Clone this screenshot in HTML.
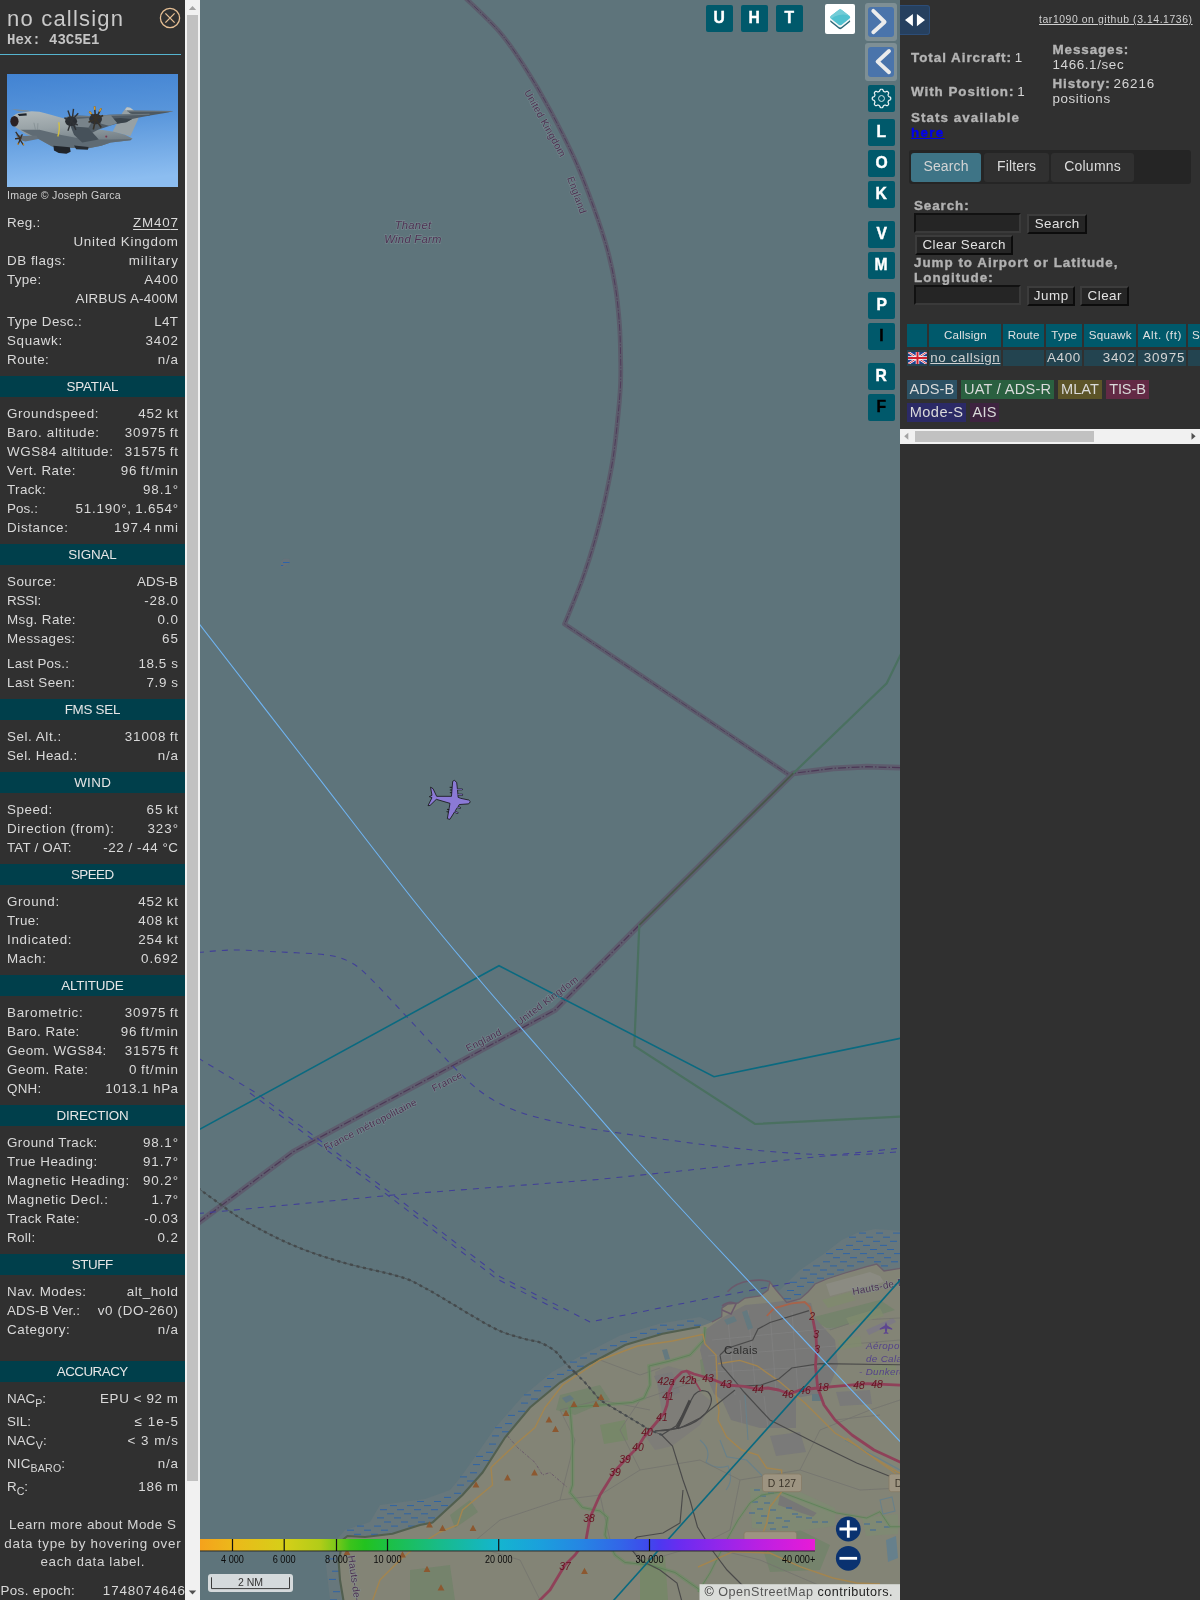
<!DOCTYPE html>
<html><head><meta charset="utf-8"><title>tar1090</title><style>
*{box-sizing:border-box}
html,body{margin:0;padding:0;font-family:"Liberation Sans",sans-serif}
body{width:1200px;height:1600px;position:relative;overflow:hidden;will-change:transform;background:#5e747b;font-family:"Liberation Sans",sans-serif;font-size:13.4px;color:#d8d8d8}
#L{position:absolute;left:0;top:0;width:185px;height:1600px;background:#303030;overflow:hidden;letter-spacing:.42px}
#L .cs{position:absolute;left:7px;top:4.6px;font-size:22px;line-height:28px;color:#c9c9c9;letter-spacing:1.25px;white-space:nowrap}
#L .hex{position:absolute;left:7px;top:30.5px;font-family:"Liberation Mono",monospace;font-weight:bold;font-size:14px;line-height:18px;color:#c4c4c4;letter-spacing:0;white-space:nowrap}
#L .close{position:absolute;left:158px;top:6px}
#L .tl{position:absolute;left:0;top:53.6px;width:181px;height:1.3px;background:#55b4cf}
#L .ph{position:absolute;left:7px;top:74px}
#L .cap{position:absolute;left:7px;top:188px;font-size:10.6px;line-height:14px;color:#d0d0d0;letter-spacing:.25px;white-space:nowrap}
#L .r{position:absolute;left:7px;width:171px;height:19px;line-height:19px;display:flex;justify-content:space-between;white-space:nowrap;color:#d9d9d9}
#L .r u{text-decoration:underline;text-underline-offset:1.5px}
#L .r sub{font-size:10.6px;line-height:0;vertical-align:-3.5px}
#L .ep{left:0;width:185px}
#L .h{position:absolute;left:0;width:185px;height:21px;line-height:21px;background:#003f4b;color:#e6e6e6;text-align:center;letter-spacing:.5px}
#L .learn{position:absolute;left:0;width:185px;top:1516.1px;line-height:18.6px;text-align:center;color:#d4d4d4}
#LS{position:absolute;left:185px;top:0;width:15px;height:1600px;background:#f1f1f1}
#LS .th{position:absolute;left:2px;top:15px;width:11px;height:1466px;background:#c1c1c1}
#LS .au{position:absolute;left:0;top:0}
#LS .ad{position:absolute;left:0;top:1584.6px}
#M{position:absolute;left:200px;top:0}
#M .b1{stroke:#5c5c6c;stroke-width:4.7;fill:none;stroke-linejoin:round}
#M .b1c{stroke:#4f3c5a;stroke-width:1;fill:none;stroke-dasharray:7 1.5 1.5 1.5}
#M .b2{stroke:#5e5d6e;stroke-width:5.8;fill:none;stroke-linejoin:round}
#M .b2c{stroke:#4c3856;stroke-width:1.2;fill:none;stroke-dasharray:8 2 1.5 2}
#M .gr{stroke:#4a7060;stroke-width:2.2;fill:none}
#M .db{stroke:#413f98;stroke-width:1.05;fill:none;stroke-dasharray:6 6}
#M .tun0{stroke:#4a5052;stroke-width:.9;fill:none;opacity:.85}
#M .tun{stroke:#454a4c;stroke-width:2.3;fill:none;stroke-dasharray:3 3.6}
#M .ro{stroke:#0a6a80;stroke-width:1.6;fill:none}
#M .tr{stroke:#6fb4f2;stroke-width:1.1;fill:none}
#M .ml{font-size:10.1px;fill:#4d3352;letter-spacing:.25px;stroke:rgba(135,152,158,.5);stroke-width:1.3px;paint-order:stroke}
#M .it{font-style:italic;font-size:11.3px;fill:#4f3354}
#M .abt{font-size:10.6px;fill:#0c0c0c}
#M .sc{font-size:10.5px;fill:#333}
#M .at{font-size:12.6px;letter-spacing:.48px}
#M .pr{stroke:#a3854f;stroke-width:1.4;fill:none}
#M .mw{stroke:#8f4159;stroke-width:2.8;fill:none;stroke-linejoin:round}
#M .shd{font-size:10.3px;font-style:italic;fill:#65121f}
#M .city{font-size:11.5px;fill:#2d2d2d;letter-spacing:.3px}
#M .ap{font-size:9.8px;font-style:italic;fill:#54438a;letter-spacing:.35px}
#M .rd{font-size:10.4px;fill:#3b352a;letter-spacing:.2px}
.mb{position:absolute;width:27px;height:27px;background:#00596b;border-radius:2px;color:#fff;font-weight:bold;font-size:17px;line-height:26px;text-align:center}
.mb.k{color:#000}
.mb b{display:inline-block;transform:scaleX(.92);-webkit-text-stroke:.45px}
.nv{position:absolute;left:865px;width:32px;height:38px;background:rgba(255,255,255,.2);border-radius:3px}
.nv i{position:absolute;left:3px;top:4px;width:26px;height:30px;background:#4a74ab;border-radius:3px}
.nv svg{position:absolute;left:3px;top:4px}
#ly{position:absolute;left:825px;top:4px;width:30px;height:30px;background:#fff;border-radius:2px}
#R{position:absolute;left:900px;top:0;width:300px;height:1600px;background:#303030;overflow:hidden}
#R .tg{position:absolute;left:0;top:5px;width:30px;height:30px;background:#26405f;border-radius:0 3px 3px 0;border:1px solid #2c4d78;border-left:0}
#R .gh{position:absolute;right:8px;top:13px;font-size:10.4px;line-height:14px;color:#d0d0d0;text-decoration:underline;white-space:nowrap}
#R .st{position:absolute;font-size:13.4px;line-height:15px;white-space:nowrap;color:#d6d6d6}
#R .st b{color:#b4b4b4;-webkit-text-stroke:.35px}
#R .tb{position:absolute;left:9px;top:150px;width:282px;height:34px;background:#252525;border-radius:3px}
#R .tab{position:absolute;top:3px;height:29px;line-height:27px;text-align:center;background:#303030;border-radius:3px;font-size:14px;color:#dcdcdc}
#R .tab.a{background:#3e7486;color:#d4d4d4}
#R .lb{position:absolute;left:14px;font-weight:bold;-webkit-text-stroke:.35px;color:#b2b2b2;line-height:15px;white-space:nowrap}
#R .in{position:absolute;left:14px;width:107px;height:20px;background:#252525;border:2px solid;border-color:#111 #3a3a3a #3a3a3a #111}
#R .bt{position:absolute;height:20px;background:#252525;border:2px solid;border-color:#3c3c3c #0c0c0c #0c0c0c #3c3c3c;color:#e2e2e2;text-align:center;line-height:15px;font-size:13.4px;white-space:nowrap}
#R .th{position:absolute;top:324px;height:23px;background:#00596b;color:#e0e0e0;font-size:11.6px;line-height:21px;text-align:center;white-space:nowrap;overflow:hidden}
#R .td{position:absolute;top:349.5px;height:16.5px;background:#234450;color:#d4d4d4;font-size:13.4px;line-height:16.5px;white-space:nowrap;overflow:hidden}
#R .lg{position:absolute;height:18.6px;line-height:18.6px;font-size:14.6px;color:#dadada;text-align:center;white-space:nowrap}
#R .hs{position:absolute;left:0;top:429.4px;width:300px;height:14.6px;background:#f1f1f1}
#R .hs i{position:absolute;left:15px;top:2px;width:179px;height:10.6px;background:#c1c1c1}
</style></head><body>
<svg id="M" width="700" height="1600" viewBox="200 0 700 1600">
<rect x="200" y="0" width="700" height="1600" fill="#5e747b"/>
<path d="M330.0 1600.0 L326.0 1565.0 L332.0 1545.0 L345.0 1530.0 L370.0 1522.0 L380.0 1505.0 L425.0 1499.0 L450.0 1490.0 L460.0 1478.0 L470.0 1464.0 L495.0 1428.0 L522.0 1397.0 L552.0 1372.0 L585.0 1353.5 L620.0 1335.5 L660.0 1323.5 L700.0 1317.0 L712.0 1322.0 L700.0 1326.7 L700.0 1326.7 L662.5 1333.7 L625.0 1345.0 L590.0 1363.7 L560.0 1382.5 L530.0 1407.5 L505.0 1437.5 L482.5 1472.5 L462.5 1495.0 L432.5 1522.5 L420.0 1525.0 L392.5 1533.7 L365.0 1537.0 L347.5 1536.0 L342.5 1540.0 L338.7 1562.5 L340.0 1580.0 L343.7 1602.0 Z" fill="#67777c"/>
<path d="M778.0 1292.0 L790.0 1280.0 L800.0 1270.0 L825.0 1253.0 L841.7 1240.0 L858.0 1232.5 L875.0 1229.0 L902.0 1231.0 L902.0 1268.0 L902.0 1268.0 L884.0 1271.0 L876.7 1264.0 L866.7 1266.7 L845.0 1273.0 L826.7 1279.0 L815.0 1284.0 L808.0 1292.0 L800.0 1299.0 L786.7 1302.5 L776.0 1290.0 L770.0 1282.0 Z" fill="#67777c"/>
<path d="M343.7 1602.0 L340.0 1580.0 L338.7 1562.5 L342.5 1540.0 L347.5 1536.0 L365.0 1537.0 L392.5 1533.7 L420.0 1525.0 L432.5 1522.5 L462.5 1495.0 L482.5 1472.5 L505.0 1437.5 L530.0 1407.5 L560.0 1382.5 L590.0 1363.7 L625.0 1345.0 L662.5 1333.7 L700.0 1326.7 L712.0 1322.0 L721.7 1316.7 L722.0 1308.0 L728.0 1304.0 L738.0 1303.0 L745.0 1298.0 L760.0 1296.0 L768.0 1290.0 L770.0 1282.0 L776.0 1290.0 L786.7 1302.5 L800.0 1299.0 L808.0 1292.0 L815.0 1284.0 L826.7 1279.0 L845.0 1273.0 L866.7 1266.7 L876.7 1264.0 L884.0 1271.0 L902.0 1268.0 L902.0 1602.0 Z" fill="#838476"/>
<path d="M687.0 1321.1h7 M660.0 1325.2h7 M677.0 1325.2h7 M694.0 1325.2h7 M650.0 1329.3h7 M667.0 1329.3h7 M640.0 1333.4h7 M657.0 1333.4h7 M630.0 1337.5h7 M620.0 1341.6h7 M610.0 1345.7h7 M600.0 1349.8h7 M590.0 1353.9h7 M580.0 1358.0h7 M570.0 1362.1h7 M577.0 1366.2h7 M567.0 1370.3h7 M557.0 1374.4h7 M547.0 1378.5h7 M544.0 1386.7h7 M534.0 1390.8h7 M524.0 1394.9h7 M531.0 1399.0h7 M521.0 1403.1h7 M518.0 1411.3h7 M508.0 1415.4h7 M505.0 1423.6h7 M495.0 1427.7h7 M502.0 1431.8h7 M492.0 1435.9h7 M489.0 1444.1h7 M486.0 1452.3h7 M476.0 1456.4h7 M483.0 1460.5h7 M473.0 1464.6h7 M470.0 1472.8h7 M460.0 1476.9h7 M467.0 1481.0h7 M457.0 1485.1h7 M454.0 1493.3h7 M444.0 1497.4h7 M417.0 1501.5h7 M434.0 1501.5h7 M390.0 1505.6h7 M407.0 1505.6h7 M424.0 1505.6h7 M441.0 1505.6h7 M380.0 1509.7h7 M397.0 1509.7h7 M414.0 1509.7h7 M431.0 1509.7h7 M387.0 1513.8h7 M404.0 1513.8h7 M421.0 1513.8h7 M377.0 1517.9h7 M394.0 1517.9h7 M411.0 1517.9h7 M428.0 1517.9h7 M384.0 1522.0h7 M401.0 1522.0h7 M418.0 1522.0h7 M357.0 1526.1h7 M374.0 1526.1h7 M391.0 1526.1h7 M408.0 1526.1h7 M347.0 1530.2h7 M364.0 1530.2h7 M381.0 1530.2h7 M354.0 1534.3h7 M371.0 1534.3h7 M334.0 1542.5h7 M331.0 1550.7h7 M328.0 1558.9h7 M332.0 1571.2h7 M329.0 1579.4h7 M333.0 1591.7h7 M330.0 1599.9h7 M859.0 1233.1h7 M876.0 1233.1h7 M893.0 1233.1h7 M849.0 1237.2h7 M866.0 1237.2h7 M883.0 1237.2h7 M856.0 1241.3h7 M873.0 1241.3h7 M890.0 1241.3h7 M846.0 1245.4h7 M863.0 1245.4h7 M880.0 1245.4h7 M836.0 1249.5h7 M853.0 1249.5h7 M870.0 1249.5h7 M887.0 1249.5h7 M826.0 1253.6h7 M843.0 1253.6h7 M860.0 1253.6h7 M877.0 1253.6h7 M894.0 1253.6h7 M833.0 1257.7h7 M850.0 1257.7h7 M867.0 1257.7h7 M884.0 1257.7h7 M823.0 1261.8h7 M840.0 1261.8h7 M857.0 1261.8h7 M874.0 1261.8h7 M891.0 1261.8h7 M813.0 1265.9h7 M830.0 1265.9h7 M847.0 1265.9h7 M881.0 1265.9h7 M803.0 1270.0h7 M820.0 1270.0h7 M837.0 1270.0h7 M810.0 1274.1h7 M827.0 1274.1h7 M800.0 1278.2h7 M817.0 1278.2h7 M790.0 1282.3h7 M807.0 1282.3h7 M797.0 1286.4h7 M787.0 1290.5h7 M794.0 1294.6h7 M784.0 1298.7h7" stroke="#2c63a8" stroke-width="0.95" fill="none"/>
<path d="M560 1395L600 1385L610 1400L575 1415L556 1410Z M450 1515L470 1500L478 1512L455 1528Z M410 1570L450 1565L455 1600L410 1600Z M760 1540L800 1530L830 1545L820 1570L770 1572Z M810 1318L880 1300L895 1310L830 1330Z M700 1360L716 1352L716 1372L702 1378Z" fill="#75836c"/>
<path d="M640 1560L665 1556L668 1600L640 1600Z M600 1425L625 1420L628 1440L604 1444Z" fill="#778769"/>
<path d="M705 1330L722 1318L745 1305L768 1303L790 1300L811 1303L815 1318L835 1340L838 1365L830 1385L818 1394L796 1398L796 1428L760 1428L731 1420L722 1400L714 1394L706 1375L700 1350Z" fill="#787877"/>
<path d="M655 1372L668 1366L690 1372L700 1392L712 1402L700 1425L672 1446L655 1450L645 1436L662 1412Z" fill="#7c7b7a" opacity=".75"/>
<path d="M654 1376L672 1372L680 1392L664 1400Z M836 1392L870 1390L872 1404L840 1406Z M770 1436L800 1432L806 1452L776 1456Z" fill="#7a7a79"/>
<path d="M866 1330L893 1318L896 1322L869 1335Z" fill="#7d7a84"/>
<path d="M728 1320L735 1395 M748 1310L756 1395 M770 1312L776 1392 M792 1312L798 1392 M712 1340L834 1328 M708 1356L836 1346 M712 1372L832 1366 M740 1400L742 1426 M764 1396L768 1428" stroke="#838382" stroke-width="0.8" fill="none" opacity=".8"/>
<path d="M562 1398l8 -3l4 4l-8 4z M742 1312l5 -2l6 18l-5 2z M724 1320l10 -4l3 5l-10 4z M812 1394l9 0l0 7l-9 0z M662 1350l5 -1l3 10l-5 1z" fill="#64797f"/>
<path d="M700 1440Q712 1450 706 1462Q716 1470 728 1466Q734 1480 726 1490 M745 1395L748 1440 M845 1440L900 1470" stroke="#68808a" stroke-width="1.1" fill="none"/>
<path d="M540 1600L520 1560L470 1545L440 1540 M470 1545L500 1520L560 1500L600 1495L640 1470L700 1460 M560 1500L575 1440L560 1410L600 1400L650 1410 M600 1495L610 1540L650 1560L700 1545L760 1560L830 1590 M640 1470L620 1430L640 1400L700 1380 M700 1460L740 1480L800 1470L860 1490L900 1488 M740 1480L730 1530L700 1545 M800 1470L820 1430L870 1410L900 1400 M830 1330L860 1320L900 1318 M840 1345L900 1340 M835 1420L880 1415 M600 1360L640 1375L660 1368" stroke="#73746f" stroke-width="0.8" fill="none"/>
<path d="M750 1488L800 1492L835 1508L835 1526L790 1532L752 1528Z M862 1518L898 1514L898 1534L866 1536Z" fill="#7e8b72" opacity=".7"/>
<path d="M780 1495L816.7 1513L813 1516.7L778 1505Z" fill="#777776"/>
<path d="M754 1490h6 M760 1496h6 M768 1493h6 M752 1502h6 M764 1503h6 M757 1509h6 M770 1510h6 M749 1513h6 M761 1516h6 M776 1518h6 M786 1508h6 M792 1514h6 M784 1521h6 M796 1517h6 M806 1518h6 M812 1522h6 M768 1523h6 M756 1523h6 M770 1529h6 M782 1527h6 M822 1522h6 M864 1524h6 M876 1522h6 M870 1530h6 M884 1527h6" stroke="#2c63a8" stroke-width="0.9" fill="none" opacity=".9"/>
<path d="M780 1491.7L836.7 1513L866.7 1518L880 1511.7L890 1526.7L902 1526.7 M780 1492L761.7 1495L750 1503L738 1520L726.7 1540L710 1573L698 1592" stroke="#6f8f66" stroke-width="3" fill="none" opacity=".45"/>
<path d="M780 1491.7L836.7 1513L866.7 1518L880 1511.7L890 1526.7L902 1526.7 M780 1492L761.7 1495L750 1503L738 1520L726.7 1540L710 1573L698 1592" stroke="#5d7f58" stroke-width="1" fill="none" opacity=".8"/>
<path d="M720 1440L726.7 1456.7L746.7 1460L763 1476.7 M880 1500l12 -3l3 14l-12 3z" stroke="#68808a" stroke-width="1.1" fill="none"/>
<path d="M886 1540l10 -4l2 22l-10 4z" fill="#66808c"/>
<path d="M822 1300L850 1292L856 1300L828 1308Z M846 1318L880 1308L884 1316L850 1326Z M838 1340L860 1336L862 1346L840 1350Z M870 1366L896 1364L896 1376L872 1378Z" fill="#7f8b6e" opacity=".8"/>
<path d="M826 1284L870 1272L880 1276L884 1282L830 1296Z" fill="#8b8b82"/>
<path d="M705.0 1327.0 L704.0 1340.0 L690.0 1355.0 L668.0 1361.5 L649.0 1366.0 L650.0 1385.0 L644.0 1398.0 L632.5 1402.5 L600.0 1405.0 L570.0 1407.5 L572.5 1440.0 L572.5 1485.0 L570.0 1492.5 L582.5 1507.5 L600.0 1511.0 L607.5 1517.5 L605.0 1535.0 L615.0 1555.0 L625.0 1562.5 L650.0 1565.0 L675.0 1572.5 L700.0 1590.0 L712.0 1602.0" stroke="#6b8c63" stroke-width="3.6" fill="none" opacity="0.6"/><path d="M705.0 1327.0 L704.0 1340.0 L690.0 1355.0 L668.0 1361.5 L649.0 1366.0 L650.0 1385.0 L644.0 1398.0 L632.5 1402.5 L600.0 1405.0 L570.0 1407.5 L572.5 1440.0 L572.5 1485.0 L570.0 1492.5 L582.5 1507.5 L600.0 1511.0 L607.5 1517.5 L605.0 1535.0 L615.0 1555.0 L625.0 1562.5 L650.0 1565.0 L675.0 1572.5 L700.0 1590.0 L712.0 1602.0" stroke="#587a53" stroke-width="1" fill="none" opacity=".7"/>
<path d="M343.7 1602.0 L340.0 1580.0 L338.7 1562.5 L342.5 1540.0 L347.5 1536.0 L365.0 1537.0 L392.5 1533.7 L420.0 1525.0 L432.5 1522.5 L462.5 1495.0 L482.5 1472.5 L505.0 1437.5 L530.0 1407.5 L560.0 1382.5 L590.0 1363.7 L625.0 1345.0 L662.5 1333.7 L700.0 1326.7" stroke="#525f4f" stroke-width="2.1" fill="none"/>
<path d="M712.0 1322.0 L721.7 1316.7 L722.0 1308.0 L728.0 1304.0 L738.0 1303.0 L745.0 1298.0 L760.0 1296.0 L768.0 1290.0 L770.0 1282.0 L776.0 1290.0 L786.7 1302.5 L800.0 1299.0 L808.0 1292.0 L815.0 1284.0 L826.7 1279.0 L845.0 1273.0 L866.7 1266.7 L876.7 1264.0 L884.0 1271.0 L902.0 1268.0" stroke="#6b5f6c" stroke-width="1.3" fill="none"/>
<path d="M727.5 1291.7Q735 1283 750 1280.8Q762 1279 770 1281.7 M722 1306Q730 1300 736 1304L731 1314L722 1310" stroke="#6b5a6c" stroke-width="1.6" fill="none"/>
<path d="M507.5 1436L517.5 1447.5L535 1462.5L542.5 1475L550 1472.5L567.5 1487.5" stroke="#6a586a" stroke-width="0.9" stroke-dasharray="3 1.5 1 1.5" fill="none"/>
<path d="M400.0 1560.0 L415.0 1547.5 L440.0 1532.0 L457.5 1525.0 L462.5 1510.0 L492.5 1485.0 L491.0 1467.5 L517.5 1442.5 L535.0 1427.5 L545.0 1407.5 L562.5 1385.0 L600.0 1360.0 L637.5 1346.0 L672.5 1341.0 L703.0 1334.4 L705.0 1344.0 L716.0 1355.0 L717.0 1376.7 L716.0 1394.0 L719.0 1411.0 L718.0 1420.0 L726.7 1437.0 L741.7 1450.0 L758.0 1455.0 L766.7 1468.0 L781.7 1470.0 L781.7 1491.7 L770.0 1506.7 L766.7 1523.0 L763.0 1533.0 L768.0 1552.0" class="pr"/>
<path d="M718.0 1363.7 L739.7 1360.4 L757.0 1365.8 L778.7 1381.0 L804.7 1402.7 L813.0 1411.0 L835.0 1433.0 L856.7 1446.0 L878.0 1461.0 L893.5 1472.0 L902.0 1480.0" class="pr"/>
<path d="M400 1560L380 1580L372 1602" class="pr"/>
<path d="M698 1567L733 1551.7L770 1553L800 1566.7L833 1578L856.7 1583L880 1584" class="pr"/>
<path d="M846.7 1438L866.7 1453L896.7 1471.7L902 1474" class="pr"/>
<path d="M661.7 1435L672.5 1446L683 1480L690 1500L697.5 1527L712 1550L727 1570L747 1590L762 1602 M683 1490L680 1523L663 1533L637 1537L628 1545L640 1560L660 1570L677 1583L682 1602 M720 1355L722 1366L735 1381L744 1392L770 1420L813 1441.7L856.7 1463L889 1476L902 1482 M720 1355L726.7 1348.5L752.7 1340L758 1329L770 1322.5L809 1310.6 M902 1364.8L820 1363.7L791.7 1368L778.7 1379L761 1385L744 1386 M713.7 1407L735 1390 M655 1431L680 1428L700 1418L713.7 1407" stroke="#4a4a4a" stroke-width="1.15" fill="none"/>
<path d="M655 1431Q690 1430 705 1414Q716 1400 708 1392Q700 1388 694 1395Q686 1410 676 1426L661.7 1435" stroke="#484848" stroke-width="1.2" fill="none"/>
<path d="M690 1400.5L677 1428.7" stroke="#454545" stroke-width="3" fill="none"/>
<path d="M575 1372.5L585 1382.5L600 1400L625 1415L650 1430L662 1435" stroke="#4a4e50" stroke-width=".9" fill="none" opacity=".9"/><path d="M575 1372.5L585 1382.5L600 1400L625 1415L650 1430L662 1435" stroke="#484c4e" stroke-width="2.1" stroke-dasharray="3 3.6" fill="none"/>
<path d="M902.0 1385.3 L867.5 1383.6 L835.0 1386.4 L817.7 1388.0 L800.0 1390.0 L789.5 1394.0 L778.7 1390.0 L767.8 1388.0 L757.0 1388.8 L744.0 1386.4 L726.7 1385.0 L711.5 1379.0 L694.0 1374.0 L686.6 1371.0 L682.0 1372.0 L674.7 1379.0 L669.0 1392.0 L667.0 1405.0 L664.0 1413.5 L653.0 1426.5 L644.0 1437.0 L637.5 1447.5 L625.0 1460.0 L615.0 1471.0 L600.0 1495.0 L590.0 1517.5 L586.0 1540.0 L575.0 1555.0 L565.0 1565.0 L550.0 1590.0 L538.0 1602.0" class="mw"/>
<path d="M817.7 1388.0 L820.0 1394.0 L824.0 1405.0 L835.0 1420.0 L852.0 1435.0 L874.0 1450.0 L902.0 1463.0" class="mw"/>
<path d="M817.7 1388.0 L815.5 1366.0 L816.6 1348.5 L816.0 1335.5 L813.0 1320.0" class="mw"/>
<path d="M686.6 1371L696 1383L700.7 1390.8" class="mw" style="stroke-width:1.6"/>
<path d="M813 1320L810 1307L804.7 1302L791.7 1303.4L774 1308.4L766.8 1316" stroke="#a8634a" stroke-width="1.8" fill="none"/>
<path d="M597.6 1400.0L601.0 1393.8L604.4 1400.0Z M592.6 1407.0L596.0 1400.8L599.4 1407.0Z M570.6 1407.0L574.0 1400.8L577.4 1407.0Z M562.6 1416.0L566.0 1409.8L569.4 1416.0Z M545.6 1422.5L549.0 1416.3L552.4 1422.5Z M552.1 1432.0L555.5 1425.8L558.9 1432.0Z M531.1 1475.5L534.5 1469.3L537.9 1475.5Z M504.1 1480.5L507.5 1474.3L510.9 1480.5Z M472.6 1487.5L476.0 1481.3L479.4 1487.5Z M426.1 1527.5L429.5 1521.3L432.9 1527.5Z M439.1 1531.0L442.5 1524.8L445.9 1531.0Z M469.6 1531.0L473.0 1524.8L476.4 1531.0Z M423.6 1572.0L427.0 1565.8L430.4 1572.0Z M437.6 1590.5L441.0 1584.3L444.4 1590.5Z M581.1 1574.0L584.5 1567.8L587.9 1574.0Z M399.1 1557.5L402.5 1551.3L405.9 1557.5Z M343.6 1555.0L347.0 1548.8L350.4 1555.0Z" fill="#8c5830"/>
<text x="666" y="1385" class="shd" text-anchor="middle">42a</text>
<text x="688" y="1384" class="shd" text-anchor="middle">42b</text>
<text x="668" y="1400" class="shd" text-anchor="middle">41</text>
<text x="662" y="1421" class="shd" text-anchor="middle">41</text>
<text x="647" y="1436" class="shd" text-anchor="middle">40</text>
<text x="638" y="1451" class="shd" text-anchor="middle">40</text>
<text x="625" y="1463" class="shd" text-anchor="middle">39</text>
<text x="615" y="1476" class="shd" text-anchor="middle">39</text>
<text x="589" y="1522" class="shd" text-anchor="middle">38</text>
<text x="565" y="1570" class="shd" text-anchor="middle">37</text>
<text x="708" y="1382" class="shd" text-anchor="middle">43</text>
<text x="726" y="1388" class="shd" text-anchor="middle">43</text>
<text x="758" y="1393" class="shd" text-anchor="middle">44</text>
<text x="788" y="1398" class="shd" text-anchor="middle">46</text>
<text x="805" y="1394" class="shd" text-anchor="middle">46</text>
<text x="823" y="1391" class="shd" text-anchor="middle">18</text>
<text x="859" y="1389" class="shd" text-anchor="middle">48</text>
<text x="877" y="1388" class="shd" text-anchor="middle">48</text>
<text x="812" y="1320" class="shd" text-anchor="middle">2</text>
<text x="816" y="1338" class="shd" text-anchor="middle">3</text>
<text x="817" y="1353" class="shd" text-anchor="middle">3</text>
<text x="741" y="1354" text-anchor="middle" class="city">Calais</text>
<text class="ml" style="font-size:10px" transform="translate(853,1295) rotate(-11)">Hauts-de-F</text>
<text class="ml" style="font-size:10px" transform="translate(348,1556) rotate(82)">Hauts-de-Fr</text>
<text class="ap" x="866" y="1349">Aéropor</text><text class="ap" x="866" y="1362">de Cala</text><text class="ap" x="859" y="1375">- Dunkerq</text>
<path d="M886 1322l1.2 3.5l5 3v1.2l-5 -1.3l-.4 3.5l1.5 1.2v.9l-2.3 -.6l-2.3 .6v-.9l1.5 -1.2l-.4 -3.5l-5 1.3v-1.2l5 -3z" fill="#5d4690"/>
<rect x="762.5" y="1474" width="39" height="17.7" rx="2.5" fill="#9d9481" stroke="#857b66" stroke-width="0.8"/><text x="782" y="1487.3" text-anchor="middle" class="rd">D 127</text>
<rect x="889" y="1474" width="16" height="17.7" rx="2.5" fill="#9d9481" stroke="#857b66" stroke-width="0.8"/><text x="898.5" y="1487.3" text-anchor="middle" class="rd">D</text>
<rect x="744" y="1531.7" width="52.7" height="12" rx="2.5" fill="#9d9481" stroke="#857b66" stroke-width="0.8"/>
<path d="M465.5 -2 C471.7 4.1 490.1 20.9 500 32.5 C509.9 44.1 516.7 54.6 525 67.5 C533.3 80.4 541.7 94.6 550 110 C558.3 125.4 567.7 143.8 575 160 C582.3 176.2 588.3 192.5 593.7 207.5 C599.1 222.5 603.9 236.7 607.5 250 C611.1 263.3 613.5 275.0 615.5 287.5 C617.5 300.0 618.6 312.6 619.5 325 C620.4 337.4 620.5 352.0 620.7 362 C620.9 372.0 620.9 376.5 620.5 385 C620.1 393.5 619.5 401.1 618.3 413 C617.1 424.9 615.5 442.2 613.3 456.7 C611.1 471.2 608.0 486.1 605 500 C602.0 513.9 598.6 527.2 595 540 C591.4 552.8 587.2 565.6 583.3 576.7 C579.4 587.8 574.8 598.8 571.7 606.7 C568.6 614.6 567.0 618.3 564.5 624 L789.3 775 " class="b1"/><path d="M465.5 -2 C471.7 4.1 490.1 20.9 500 32.5 C509.9 44.1 516.7 54.6 525 67.5 C533.3 80.4 541.7 94.6 550 110 C558.3 125.4 567.7 143.8 575 160 C582.3 176.2 588.3 192.5 593.7 207.5 C599.1 222.5 603.9 236.7 607.5 250 C611.1 263.3 613.5 275.0 615.5 287.5 C617.5 300.0 618.6 312.6 619.5 325 C620.4 337.4 620.5 352.0 620.7 362 C620.9 372.0 620.9 376.5 620.5 385 C620.1 393.5 619.5 401.1 618.3 413 C617.1 424.9 615.5 442.2 613.3 456.7 C611.1 471.2 608.0 486.1 605 500 C602.0 513.9 598.6 527.2 595 540 C591.4 552.8 587.2 565.6 583.3 576.7 C579.4 587.8 574.8 598.8 571.7 606.7 C568.6 614.6 567.0 618.3 564.5 624 L789.3 775 " class="b1c"/>
<path d="M900 767.7 L866.7 766.7 L833.3 768.3 L793.3 773.3 L639.3 925 L555 1010 L500 1040 L293.3 1151.7 L198 1223" class="b2"/><path d="M900 767.7 L866.7 766.7 L833.3 768.3 L793.3 773.3 L639.3 925 L555 1010 L500 1040 L293.3 1151.7 L198 1223" class="b2c"/>
<path d="M902 652 L886.7 683.3 L793.3 773.3 L639.3 925 L634.3 1046 L755 1124 L902 1116.5" class="gr"/>
<path d="M793.3 773.3 L639.3 925" stroke="#4b4a44" stroke-width="1.6" fill="none" opacity="0.8"/>
<path d="M198 952.5 C203.8 952.1 219.3 950.1 233 950 C246.7 949.9 264.4 951.2 280 952 C295.6 952.8 315.0 953.3 326.7 955 C338.4 956.7 342.8 958.2 350 962 C357.2 965.8 360.6 968.9 370 978 C379.4 987.1 391.7 1000.8 406.7 1016.7 C421.7 1032.6 446.1 1059.8 460 1073.3 C473.9 1086.8 479.5 1091.3 490 1098 C500.5 1104.7 510.3 1109.0 523 1113.3 C535.7 1117.6 551.5 1120.9 566 1124 C580.5 1127.1 582.2 1127.7 610 1131.7 C637.8 1135.7 695.8 1144.1 733 1148 C770.2 1151.9 804.8 1154.4 833 1155 C861.2 1155.6 890.5 1152.2 902 1151.7 " class="db"/>
<path d="M198 1058 L256.7 1093.3 L393.3 1195 L500 1276.7 L566.7 1310 L590 1322 L700 1300 L790 1283" class="db"/>
<path d="M250 1093 L390 1197 L497 1279 L560 1311" class="db"/>
<path d="M198 1213.5 L393.3 1195 L600 1179.3 L902 1148" class="db"/>
<path d="M198 1188 C201.7 1190.7 212.4 1198.7 220 1204 C227.6 1209.3 231.6 1213.3 243.3 1220 C255.0 1226.7 273.9 1237.0 290 1244 C306.1 1251.0 321.7 1256.2 340 1261.7 C358.3 1267.2 385.8 1272.3 400 1276.7 C414.2 1281.1 416.7 1283.7 425 1288 C433.3 1292.3 441.7 1297.6 450 1302.5 C458.3 1307.4 466.7 1312.8 475 1317.5 C483.3 1322.2 491.7 1327.4 500 1331 C508.3 1334.6 518.3 1337.1 525 1339 C531.7 1340.9 535.0 1340.5 540 1342.5 C545.0 1344.5 550.8 1347.7 555 1351 C559.2 1354.3 561.7 1358.9 565 1362.5 C568.3 1366.1 573.3 1370.8 575 1372.5 " class="tun0"/><path d="M198 1188 C201.7 1190.7 212.4 1198.7 220 1204 C227.6 1209.3 231.6 1213.3 243.3 1220 C255.0 1226.7 273.9 1237.0 290 1244 C306.1 1251.0 321.7 1256.2 340 1261.7 C358.3 1267.2 385.8 1272.3 400 1276.7 C414.2 1281.1 416.7 1283.7 425 1288 C433.3 1292.3 441.7 1297.6 450 1302.5 C458.3 1307.4 466.7 1312.8 475 1317.5 C483.3 1322.2 491.7 1327.4 500 1331 C508.3 1334.6 518.3 1337.1 525 1339 C531.7 1340.9 535.0 1340.5 540 1342.5 C545.0 1344.5 550.8 1347.7 555 1351 C559.2 1354.3 561.7 1358.9 565 1362.5 C568.3 1366.1 573.3 1370.8 575 1372.5 " class="tun"/>
<path d="M198 1130.3 L499 965.7 L714 1076.7 L902 1038" class="ro"/>
<path d="M902 1278 L605 1610" class="ro" />
<path d="M198 622.4 C216.0 645.6 270.1 715.2 306 761.5 C341.9 807.8 384.3 863.5 413.3 900 C442.3 936.5 458.9 955.6 480 980.5 C501.1 1005.4 520.0 1026.5 540 1049.5 C560.0 1072.5 583.9 1099.9 600 1118.3 C616.1 1136.7 618.4 1139.7 636.7 1160 C655.0 1180.3 679.0 1206.7 710 1240 C741.0 1273.3 791.0 1326.1 823 1360 C855.0 1393.9 888.8 1429.6 902 1443.5 " class="tr"/>
<path d="M281 561L284.5 558.5L289.5 559L289.5 563L284 567L281.5 569L281 565Z" fill="#67727a" opacity=".9"/><path d="M283 562.5h6.5M281 565.5h2.2" stroke="#2c63a8" stroke-width="1"/>
<text class="ml it" x="413" y="228.5" text-anchor="middle">Thanet</text><text class="ml it" x="413" y="243" text-anchor="middle">Wind Farm</text>
<text class="ml" transform="translate(524,92) rotate(61)">United Kingdom</text>
<text class="ml" transform="translate(567,178) rotate(70)">England</text>
<text class="ml" transform="translate(519,1026) rotate(-37)">United Kingdom</text>
<text class="ml" transform="translate(468,1052) rotate(-27)">England</text>
<text class="ml" transform="translate(434,1092) rotate(-27)">France</text>
<text class="ml" transform="translate(326,1151) rotate(-27)">France métropolitaine</text>
<g transform="translate(410,760) scale(0.066667)">
<path d="M715 440H778M722 520H784M708 704L752 717M670 778L714 792" stroke="#111" stroke-width="26" stroke-linecap="round"/>
<path d="M905 625 L880 600 L760 575 L722 560 L712 440 L700 335 L665 305 L640 320 L632 420 L622 545 L400 545 L345 430 L308 408 L330 530 L290 550 L330 565 L270 685 L300 682 L395 590 L600 650 L560 880 L598 890 L680 760 L740 668 L880 658 Z" fill="#8b7ad6" stroke="#111" stroke-width="12" stroke-linejoin="round"/>
<path d="M630 410H595M628 450H598M626 490H598M590 745L555 740M580 780L548 775" stroke="#111" stroke-width="13"/>
<path d="M712 440H776M720 520H782M704 703L750 717M668 777L712 791" stroke="#8b7ad6" stroke-width="13" stroke-linecap="round"/>
</g>
<defs><linearGradient id="ab" x1="0" y1="0" x2="1" y2="0"><stop offset="0.0000" stop-color="#f5a21c"/><stop offset="0.0520" stop-color="#ecb81a"/><stop offset="0.1366" stop-color="#d6cf18"/><stop offset="0.1951" stop-color="#b2cc18"/><stop offset="0.2211" stop-color="#7cc81a"/><stop offset="0.2439" stop-color="#3cc31b"/><stop offset="0.2683" stop-color="#22c21f"/><stop offset="0.3041" stop-color="#1cc043"/><stop offset="0.3902" stop-color="#18bb8a"/><stop offset="0.4846" stop-color="#14b5cf"/><stop offset="0.5528" stop-color="#1ba0dc"/><stop offset="0.6179" stop-color="#2586e3"/><stop offset="0.6829" stop-color="#3266e8"/><stop offset="0.7301" stop-color="#3f48ec"/><stop offset="0.7480" stop-color="#4d38f0"/><stop offset="0.7805" stop-color="#6a2cf0"/><stop offset="0.8455" stop-color="#9426ea"/><stop offset="0.9106" stop-color="#bb20e2"/><stop offset="0.9756" stop-color="#dc1cda"/><stop offset="1.0000" stop-color="#e81bd6"/></linearGradient></defs><rect x="200" y="1539" width="615" height="12" fill="url(#ab)"/><rect x="200" y="1550.3" width="615" height="1.3" fill="#2a2a2a" opacity="0.75"/><rect x="231.9" y="1539" width="1.2" height="12" fill="#111"/><text x="221.1" y="1562.5" textLength="22.8" lengthAdjust="spacingAndGlyphs" class="abt">4 000</text><rect x="283.6" y="1539" width="1.2" height="12" fill="#111"/><text x="272.7" y="1562.5" textLength="23" lengthAdjust="spacingAndGlyphs" class="abt">6 000</text><rect x="335.9" y="1539" width="1.2" height="12" fill="#111"/><text x="325.1" y="1562.5" textLength="22.8" lengthAdjust="spacingAndGlyphs" class="abt">8 000</text><rect x="386.9" y="1539" width="1.2" height="12" fill="#111"/><text x="373.5" y="1562.5" textLength="28" lengthAdjust="spacingAndGlyphs" class="abt">10 000</text><rect x="498.1" y="1539" width="1.2" height="12" fill="#111"/><text x="484.9" y="1562.5" textLength="27.5" lengthAdjust="spacingAndGlyphs" class="abt">20 000</text><rect x="648.9" y="1539" width="1.2" height="12" fill="#111"/><text x="635.5" y="1562.5" textLength="28" lengthAdjust="spacingAndGlyphs" class="abt">30 000</text><text x="782" y="1562.5" textLength="33.3" lengthAdjust="spacingAndGlyphs" class="abt">40 000+</text>
<rect x="208" y="1574" width="85" height="18" rx="3" fill="#dfe3e4" opacity="0.92"/>
<path d="M211.5 1577.3V1588.6H289.5V1577.3" stroke="#3a3a3a" stroke-width="1" fill="none"/>
<text x="250.5" y="1586" text-anchor="middle" class="sc">2 NM</text>
<rect x="699.5" y="1584.2" width="201" height="17" fill="#e2e4e2" opacity="0.93"/>
<text x="704.6" y="1595.8" class="at"><tspan fill="#333">© </tspan><tspan fill="#555">OpenStreetMap</tspan><tspan fill="#222"> contributors.</tspan></text>
<circle cx="848.3" cy="1529" r="12.4" fill="#0a3270"/><path d="M839.5 1529H857.1M848.3 1520.2V1537.8" stroke="#fff" stroke-width="2.8"/>
<circle cx="848.3" cy="1558.3" r="12.4" fill="#0a3270"/><path d="M839.5 1558.3H857.1" stroke="#fff" stroke-width="2.8"/>
</svg>
<div class="mb" style="left:706px;top:5px"><b>U</b></div>
<div class="mb" style="left:741px;top:5px"><b>H</b></div>
<div class="mb" style="left:776px;top:5px"><b>T</b></div>
<div id="ly"><svg width="30" height="30" viewBox="0 0 30 30"><path d="M13.6 5.9 Q15.2 4.6 16.8 5.9 L24.6 12.0 Q26 13.2 24.6 14.4 L16.8 20.7 Q15.2 22 13.6 20.7 L5.8 14.4 Q4.4 13.2 5.8 12.0 Z" transform="translate(0,3.9)" fill="#2b6777"/><path d="M13.6 5.9 Q15.2 4.6 16.8 5.9 L24.6 12.0 Q26 13.2 24.6 14.4 L16.8 20.7 Q15.2 22 13.6 20.7 L5.8 14.4 Q4.4 13.2 5.8 12.0 Z" transform="translate(0,2.1)" fill="#f2f7f7"/><path d="M13.6 5.9 Q15.2 4.6 16.8 5.9 L24.6 12.0 Q26 13.2 24.6 14.4 L16.8 20.7 Q15.2 22 13.6 20.7 L5.8 14.4 Q4.4 13.2 5.8 12.0 Z" fill="#50c1cf"/><path d="M5.8 12 L13.6 5.9 Q15.2 4.6 16.8 5.9 L24.6 12 Q20 9.4 14 11 Q9 12.4 6.2 14.7 Q4.4 13.2 5.8 12Z" fill="#72ccd7"/></svg></div>
<div class="nv" style="top:3px"><i></i><svg width="26" height="30" viewBox="868 7 26 30"><path d="M873.3 10.8L884.6 22L873.3 32.2" stroke="#ececec" stroke-width="3.9" stroke-linecap="round" stroke-linejoin="round" fill="none"/></svg></div>
<div class="nv" style="top:43px"><i></i><svg width="26" height="30" viewBox="868 47 26 30"><path d="M889 51L877.6 61.6L889 72.2" stroke="#ececec" stroke-width="3.9" stroke-linecap="round" stroke-linejoin="round" fill="none"/></svg></div>
<div class="mb" style="left:868px;top:85px"><svg width="27" height="27" viewBox="0 0 27 27" style="display:block"><path d="M13.50 4.24 L13.74 4.25 L13.98 4.27 L14.22 4.32 L14.46 4.40 L14.68 4.54 L14.88 4.78 L15.05 5.15 L15.18 5.57 L15.31 5.94 L15.46 6.20 L15.61 6.36 L15.78 6.47 L15.96 6.56 L16.13 6.64 L16.31 6.72 L16.49 6.79 L16.67 6.86 L16.85 6.92 L17.05 6.96 L17.28 6.95 L17.56 6.87 L17.91 6.70 L18.31 6.50 L18.69 6.36 L19.00 6.33 L19.26 6.39 L19.48 6.50 L19.68 6.63 L19.87 6.79 L20.05 6.95 L20.21 7.13 L20.37 7.32 L20.50 7.52 L20.61 7.74 L20.67 8.00 L20.64 8.31 L20.50 8.69 L20.30 9.09 L20.13 9.44 L20.05 9.72 L20.04 9.95 L20.08 10.15 L20.14 10.33 L20.21 10.51 L20.28 10.69 L20.36 10.87 L20.44 11.04 L20.53 11.22 L20.64 11.39 L20.80 11.54 L21.06 11.69 L21.43 11.82 L21.85 11.95 L22.22 12.12 L22.46 12.32 L22.60 12.54 L22.68 12.78 L22.73 13.02 L22.75 13.26 L22.76 13.50 L22.75 13.74 L22.73 13.98 L22.68 14.22 L22.60 14.46 L22.46 14.68 L22.22 14.88 L21.85 15.05 L21.43 15.18 L21.06 15.31 L20.80 15.46 L20.64 15.61 L20.53 15.78 L20.44 15.96 L20.36 16.13 L20.28 16.31 L20.21 16.49 L20.14 16.67 L20.08 16.85 L20.04 17.05 L20.05 17.28 L20.13 17.56 L20.30 17.91 L20.50 18.31 L20.64 18.69 L20.67 19.00 L20.61 19.26 L20.50 19.48 L20.37 19.68 L20.21 19.87 L20.05 20.05 L19.87 20.21 L19.68 20.37 L19.48 20.50 L19.26 20.61 L19.00 20.67 L18.69 20.64 L18.31 20.50 L17.91 20.30 L17.56 20.13 L17.28 20.05 L17.05 20.04 L16.85 20.08 L16.67 20.14 L16.49 20.21 L16.31 20.28 L16.13 20.36 L15.96 20.44 L15.78 20.53 L15.61 20.64 L15.46 20.80 L15.31 21.06 L15.18 21.43 L15.05 21.85 L14.88 22.22 L14.68 22.46 L14.46 22.60 L14.22 22.68 L13.98 22.73 L13.74 22.75 L13.50 22.76 L13.26 22.75 L13.02 22.73 L12.78 22.68 L12.54 22.60 L12.32 22.46 L12.12 22.22 L11.95 21.85 L11.82 21.43 L11.69 21.06 L11.54 20.80 L11.39 20.64 L11.22 20.53 L11.04 20.44 L10.87 20.36 L10.69 20.28 L10.51 20.21 L10.33 20.14 L10.15 20.08 L9.95 20.04 L9.72 20.05 L9.44 20.13 L9.09 20.30 L8.69 20.50 L8.31 20.64 L8.00 20.67 L7.74 20.61 L7.52 20.50 L7.32 20.37 L7.13 20.21 L6.95 20.05 L6.79 19.87 L6.63 19.68 L6.50 19.48 L6.39 19.26 L6.33 19.00 L6.36 18.69 L6.50 18.31 L6.70 17.91 L6.87 17.56 L6.95 17.28 L6.96 17.05 L6.92 16.85 L6.86 16.67 L6.79 16.49 L6.72 16.31 L6.64 16.13 L6.56 15.96 L6.47 15.78 L6.36 15.61 L6.20 15.46 L5.94 15.31 L5.57 15.18 L5.15 15.05 L4.78 14.88 L4.54 14.68 L4.40 14.46 L4.32 14.22 L4.27 13.98 L4.25 13.74 L4.24 13.50 L4.25 13.26 L4.27 13.02 L4.32 12.78 L4.40 12.54 L4.54 12.32 L4.78 12.12 L5.15 11.95 L5.57 11.82 L5.94 11.69 L6.20 11.54 L6.36 11.39 L6.47 11.22 L6.56 11.04 L6.64 10.87 L6.72 10.69 L6.79 10.51 L6.86 10.33 L6.92 10.15 L6.96 9.95 L6.95 9.72 L6.87 9.44 L6.70 9.09 L6.50 8.69 L6.36 8.31 L6.33 8.00 L6.39 7.74 L6.50 7.52 L6.63 7.32 L6.79 7.13 L6.95 6.95 L7.13 6.79 L7.32 6.63 L7.52 6.50 L7.74 6.39 L8.00 6.33 L8.31 6.36 L8.69 6.50 L9.09 6.70 L9.44 6.87 L9.72 6.95 L9.95 6.96 L10.15 6.92 L10.33 6.86 L10.51 6.79 L10.69 6.72 L10.87 6.64 L11.04 6.56 L11.22 6.47 L11.39 6.36 L11.54 6.20 L11.69 5.94 L11.82 5.57 L11.95 5.15 L12.12 4.78 L12.32 4.54 L12.54 4.40 L12.78 4.32 L13.02 4.27 L13.26 4.25Z" stroke="#eef5f6" stroke-width="1.2" fill="none" stroke-linejoin="round"/><circle cx="13.5" cy="13.5" r="2.95" stroke="#dbe8ea" stroke-width="1" fill="none"/></svg></div>
<div class="mb" style="left:868px;top:119px"><b>L</b></div>
<div class="mb" style="left:868px;top:150px"><b>O</b></div>
<div class="mb" style="left:868px;top:181px"><b>K</b></div>
<div class="mb" style="left:868px;top:221px"><b>V</b></div>
<div class="mb" style="left:868px;top:252px"><b>M</b></div>
<div class="mb" style="left:868px;top:292px"><b>P</b></div>
<div class="mb k" style="left:868px;top:323px"><b>I</b></div>
<div class="mb" style="left:868px;top:363px"><b>R</b></div>
<div class="mb k" style="left:868px;top:394px"><b>F</b></div>
<div id="L">
<div class="cs" style="letter-spacing:1.204px">no callsign</div>
<div class="hex">Hex: 43C5E1</div>
<svg class="close" width="24" height="24" viewBox="0 0 24 24"><circle cx="12" cy="12" r="9.6" fill="none" stroke="#e6bf94" stroke-width="1.3"/><path d="M7.4 7.4L16.6 16.6M16.6 7.4L7.4 16.6" stroke="#e6bf94" stroke-width="1.3" fill="none"/></svg>
<div class="tl"></div>
<svg class="ph" width="171" height="113" viewBox="45 88 1080 712" preserveAspectRatio="none">
<defs><linearGradient id="sky" x1="0" y1="0" x2="0.12" y2="1"><stop offset="0" stop-color="#4283d2"/><stop offset="0.45" stop-color="#5996db"/><stop offset="1" stop-color="#8cbdf0"/></linearGradient>
<linearGradient id="fus" x1="0" y1="0" x2="0.25" y2="1"><stop offset="0" stop-color="#b2babc"/><stop offset="0.5" stop-color="#98a2a6"/><stop offset="1" stop-color="#6c7880"/></linearGradient></defs>
<rect x="45" y="88" width="1080" height="712" fill="url(#sky)"/>
<!-- tail fin -->
<path d="M712 452L775 330L800 298L822 300L845 318L880 350L870 380L825 478L790 470Z" fill="#97a1a5"/>
<path d="M790 312L803 297L824 300L848 320L810 322Z" fill="#bcc3c5"/>
<!-- stabilizer -->
<path d="M800 318L1095 321L1062 331L938 351L905 351L826 338Z" fill="#4e5961"/>
<path d="M800 318L1095 321L1080 325L810 324Z" fill="#7c868c"/>
<!-- far wing/left -->
<path d="M75 308L180 318L190 326L120 322Z" fill="#7f8a90"/>
<!-- fuselage -->
<path d="M72 372Q80 345 120 334L200 322L250 326Q320 344 420 372L480 400L560 430L640 440L720 452L790 470L838 495L825 505L700 520L640 540L560 556L440 552L330 545L250 500L170 470L110 432Q74 410 72 372Z" fill="url(#fus)"/>
<path d="M130 440L250 500L330 545L440 552L560 556L640 540L700 520L825 505L832 498L700 500L600 500L480 490L380 470L250 440Z" fill="#5f6b74"/>
<!-- main wing -->
<path d="M405 362L470 350L560 352L700 345L945 339L948 350L880 362L835 372L800 390L735 402L700 412L620 440L560 470L520 440L470 420Z" fill="#505b64"/>
<path d="M405 362L470 350L560 352L700 345L945 339L946 344L700 352L560 360L470 360Z" fill="#6d787f"/>
<path d="M440 400L560 430L625 500L520 520L468 470Z" fill="#46515a"/>
<path d="M690 372L760 366L835 372L800 392L740 402L705 398Z" fill="#39434b"/>
<!-- nose -->
<ellipse cx="92" cy="386" rx="26" ry="33" fill="#2b2123"/>
<path d="M112 340L168 335L170 350L122 352Z" fill="#1e2329"/>
<!-- engines -->
<path d="M470 372L560 366L575 400L560 425L480 420Z" fill="#78838a"/>
<ellipse cx="450" cy="386" rx="38" ry="30" fill="#2a2e33"/>
<path d="M430 318L452 382L495 335M465 308L455 390M408 366L492 410M430 445L450 386M480 440L455 386" stroke="#2f3236" stroke-width="9" fill="none"/>
<path d="M625 352L700 348L742 398L690 414L640 402Z" fill="#7b868c"/>
<ellipse cx="605" cy="372" rx="40" ry="33" fill="#2d3035"/>
<path d="M565 325L605 372L640 305M598 292L605 382M560 392L652 350M590 438L605 372M640 425L605 372" stroke="#37322a" stroke-width="10" fill="none"/>
<path d="M640 305L628 324M598 292L600 314M565 325L579 340" stroke="#d89b2a" stroke-width="10" fill="none"/>
<path d="M100 468L150 478L232 476L242 498L160 514L118 500Z" fill="#66717a"/>
<path d="M100 452L130 495L115 532M142 468L126 500L150 537M96 496L137 492" stroke="#382c22" stroke-width="8" fill="none"/>
<path d="M112 522L118 534M148 526L152 538" stroke="#c98d2a" stroke-width="7"/>
<path d="M372 392Q381 432 366 482" stroke="#d9c338" stroke-width="8" fill="none"/>
<!-- gear -->
<path d="M338 540L442 550L447 578L420 590L372 586L342 570Z" fill="#20242a"/>
<path d="M468 538L560 548L556 566L482 562Z" fill="#272c32"/>
<circle cx="672" cy="482" r="7" fill="#8d3c4d"/><circle cx="672" cy="482" r="3" fill="#33406e"/>
<path d="M215 395L225 440M240 398L238 440" stroke="#7d888d" stroke-width="4"/>
</svg>
<div class="cap" style="letter-spacing:0.245px">Image © Joseph Garca</div>
<div class="r" style="top:212.5px"><span style="letter-spacing:0.297px">Reg.:</span><span style="letter-spacing:0.812px"><u>ZM40<span style="letter-spacing:0">7</span></u></span></div>
<div class="r" style="top:231.5px"><span style="letter-spacing:0.45px"></span><span style="letter-spacing:0.712px;margin-right:-0.712px">United Kingdom</span></div>
<div class="r" style="top:250.5px"><span style="letter-spacing:0.519px">DB flags:</span><span style="letter-spacing:0.98px;margin-right:-0.98px">military</span></div>
<div class="r" style="top:269.5px"><span style="letter-spacing:0.347px">Type:</span><span style="letter-spacing:0.805px;margin-right:-0.805px">A400</span></div>
<div class="r" style="top:288.5px"><span style="letter-spacing:0.45px"></span><span style="letter-spacing:0.232px;margin-right:-0.232px">AIRBUS A-400M</span></div>
<div class="r" style="top:311.5px"><span style="letter-spacing:0.413px">Type Desc.:</span><span style="letter-spacing:0.307px;margin-right:-0.307px">L4T</span></div>
<div class="r" style="top:330.5px"><span style="letter-spacing:0.627px">Squawk:</span><span style="letter-spacing:0.926px;margin-right:-0.926px">3402</span></div>
<div class="r" style="top:349.5px"><span style="letter-spacing:0.466px">Route:</span><span style="letter-spacing:0.792px;margin-right:-0.792px">n/a</span></div>
<div class="h" style="top:376px;letter-spacing:-0.156px;text-indent:-0.156px">SPATIAL</div>
<div class="r" style="top:403.5px"><span style="letter-spacing:0.594px">Groundspeed:</span><span style="letter-spacing:0.883px;margin-right:-0.883px">452 kt</span></div>
<div class="r" style="top:422.5px"><span style="letter-spacing:0.674px">Baro. altitude:</span><span style="letter-spacing:0.83px;margin-right:-0.83px">30975 ft</span></div>
<div class="r" style="top:441.5px"><span style="letter-spacing:0.599px">WGS84 altitude:</span><span style="letter-spacing:0.83px;margin-right:-0.83px">31575 ft</span></div>
<div class="r" style="top:460.5px"><span style="letter-spacing:0.521px">Vert. Rate:</span><span style="letter-spacing:0.88px;margin-right:-0.88px">96 ft/min</span></div>
<div class="r" style="top:479.5px"><span style="letter-spacing:0.383px">Track:</span><span style="letter-spacing:0.916px;margin-right:-0.916px">98.1°</span></div>
<div class="r" style="top:498.5px"><span style="letter-spacing:0.097px">Pos.:</span><span style="letter-spacing:0.778px;margin-right:-0.778px">51.190°, 1.654°</span></div>
<div class="r" style="top:517.5px"><span style="letter-spacing:0.63px">Distance:</span><span style="letter-spacing:0.774px;margin-right:-0.774px">197.4 nmi</span></div>
<div class="h" style="top:544px;letter-spacing:-0.104px;text-indent:-0.104px">SIGNAL</div>
<div class="r" style="top:571.5px"><span style="letter-spacing:0.478px">Source:</span><span style="letter-spacing:0.013px;margin-right:-0.013px">ADS-B</span></div>
<div class="r" style="top:590.5px"><span style="letter-spacing:-0.197px">RSSI:</span><span style="letter-spacing:0.794px;margin-right:-0.794px">-28.0</span></div>
<div class="r" style="top:609.5px"><span style="letter-spacing:0.425px">Msg. Rate:</span><span style="letter-spacing:0.958px;margin-right:-0.958px">0.0</span></div>
<div class="r" style="top:628.5px"><span style="letter-spacing:0.417px">Messages:</span><span style="letter-spacing:1.172px;margin-right:-1.172px">65</span></div>
<div class="r" style="top:653.5px"><span style="letter-spacing:0.27px">Last Pos.:</span><span style="letter-spacing:0.628px;margin-right:-0.628px">18.5 s</span></div>
<div class="r" style="top:672.5px"><span style="letter-spacing:0.447px">Last Seen:</span><span style="letter-spacing:0.594px;margin-right:-0.594px">7.9 s</span></div>
<div class="h" style="top:699px;letter-spacing:-0.257px;text-indent:-0.257px">FMS SEL</div>
<div class="r" style="top:726.5px"><span style="letter-spacing:0.562px">Sel. Alt.:</span><span style="letter-spacing:0.83px;margin-right:-0.83px">31008 ft</span></div>
<div class="r" style="top:745.5px"><span style="letter-spacing:0.409px">Sel. Head.:</span><span style="letter-spacing:0.792px;margin-right:-0.792px">n/a</span></div>
<div class="h" style="top:772px;letter-spacing:0.324px;text-indent:0.324px">WIND</div>
<div class="r" style="top:799.5px"><span style="letter-spacing:0.549px">Speed:</span><span style="letter-spacing:0.85px;margin-right:-0.85px">65 kt</span></div>
<div class="r" style="top:818.5px"><span style="letter-spacing:0.692px">Direction (from):</span><span style="letter-spacing:0.949px;margin-right:-0.949px">323°</span></div>
<div class="r" style="top:837.5px"><span style="letter-spacing:0.175px">TAT / OAT:</span><span style="letter-spacing:0.552px;margin-right:-0.552px">-22 / -44 °C</span></div>
<div class="h" style="top:864px;letter-spacing:-0.541px;text-indent:-0.541px">SPEED</div>
<div class="r" style="top:891.5px"><span style="letter-spacing:0.623px">Ground:</span><span style="letter-spacing:0.883px;margin-right:-0.883px">452 kt</span></div>
<div class="r" style="top:910.5px"><span style="letter-spacing:0.397px">True:</span><span style="letter-spacing:0.883px;margin-right:-0.883px">408 kt</span></div>
<div class="r" style="top:929.5px"><span style="letter-spacing:0.717px">Indicated:</span><span style="letter-spacing:0.883px;margin-right:-0.883px">254 kt</span></div>
<div class="r" style="top:948.5px"><span style="letter-spacing:0.606px">Mach:</span><span style="letter-spacing:0.847px;margin-right:-0.847px">0.692</span></div>
<div class="h" style="top:975px;letter-spacing:-0.194px;text-indent:-0.194px">ALTITUDE</div>
<div class="r" style="top:1002.5px"><span style="letter-spacing:0.73px">Barometric:</span><span style="letter-spacing:0.83px;margin-right:-0.83px">30975 ft</span></div>
<div class="r" style="top:1021.5px"><span style="letter-spacing:0.456px">Baro. Rate:</span><span style="letter-spacing:0.88px;margin-right:-0.88px">96 ft/min</span></div>
<div class="r" style="top:1040.5px"><span style="letter-spacing:0.436px">Geom. WGS84:</span><span style="letter-spacing:0.83px;margin-right:-0.83px">31575 ft</span></div>
<div class="r" style="top:1059.5px"><span style="letter-spacing:0.507px">Geom. Rate:</span><span style="letter-spacing:0.859px;margin-right:-0.859px">0 ft/min</span></div>
<div class="r" style="top:1078.5px"><span style="letter-spacing:0.254px">QNH:</span><span style="letter-spacing:0.473px;margin-right:-0.473px">1013.1 hPa</span></div>
<div class="h" style="top:1105px;letter-spacing:-0.184px;text-indent:-0.184px">DIRECTION</div>
<div class="r" style="top:1132.5px"><span style="letter-spacing:0.454px">Ground Track:</span><span style="letter-spacing:0.916px;margin-right:-0.916px">98.1°</span></div>
<div class="r" style="top:1151.5px"><span style="letter-spacing:0.492px">True Heading:</span><span style="letter-spacing:0.916px;margin-right:-0.916px">91.7°</span></div>
<div class="r" style="top:1170.5px"><span style="letter-spacing:0.653px">Magnetic Heading:</span><span style="letter-spacing:0.916px;margin-right:-0.916px">90.2°</span></div>
<div class="r" style="top:1189.5px"><span style="letter-spacing:0.614px">Magnetic Decl.:</span><span style="letter-spacing:0.816px;margin-right:-0.816px">1.7°</span></div>
<div class="r" style="top:1208.5px"><span style="letter-spacing:0.366px">Track Rate:</span><span style="letter-spacing:0.794px;margin-right:-0.794px">-0.03</span></div>
<div class="r" style="top:1227.5px"><span style="letter-spacing:0.341px">Roll:</span><span style="letter-spacing:0.958px;margin-right:-0.958px">0.2</span></div>
<div class="h" style="top:1254px;letter-spacing:-0.428px;text-indent:-0.428px">STUFF</div>
<div class="r" style="top:1281.5px"><span style="letter-spacing:0.484px">Nav. Modes:</span><span style="letter-spacing:0.635px;margin-right:-0.635px">alt_hold</span></div>
<div class="r" style="top:1300.5px"><span style="letter-spacing:0.163px">ADS-B Ver.:</span><span style="letter-spacing:0.666px;margin-right:-0.666px">v0 (DO-260)</span></div>
<div class="r" style="top:1319.5px"><span style="letter-spacing:0.576px">Category:</span><span style="letter-spacing:0.792px;margin-right:-0.792px">n/a</span></div>
<div class="h" style="top:1361px;letter-spacing:-0.52px;text-indent:-0.52px">ACCURACY</div>
<div class="r" style="top:1388.5px"><span style="letter-spacing:-0.019px">NAC<sub>P</sub>:</span><span style="letter-spacing:0.592px;margin-right:-0.592px">EPU &lt; 92 m</span></div>
<div class="r" style="top:1411.5px"><span style="letter-spacing:0.043px">SIL:</span><span style="letter-spacing:1.146px;margin-right:-1.146px">≤ 1e-5</span></div>
<div class="r" style="top:1430.5px"><span style="letter-spacing:0.131px">NAC<sub>V</sub>:</span><span style="letter-spacing:1.031px;margin-right:-1.031px">&lt; 3 m/s</span></div>
<div class="r" style="top:1453.5px"><span style="letter-spacing:0.178px">NIC<sub>BARO</sub>:</span><span style="letter-spacing:0.792px;margin-right:-0.792px">n/a</span></div>
<div class="r" style="top:1476.5px"><span style="letter-spacing:-0.021px">R<sub>C</sub>:</span><span style="letter-spacing:0.912px;margin-right:-0.912px">186 m</span></div>
<div class="learn"><span style="letter-spacing:0.518px;margin-right:-0.518px">Learn more about Mode S</span><br><span style="letter-spacing:0.746px;margin-right:-0.746px">data type by hovering over</span><br><span style="letter-spacing:0.621px;margin-right:-0.621px">each data label.</span></div>
<div class="r ep" style="top:1580.5px"><span style="letter-spacing:0.361px;margin-left:.5px">Pos. epoch:</span><span style="letter-spacing:0.852px;margin-right:-0.852px">1748074646</span></div>
</div>
<div id="LS"><div class="th"></div><svg class="au" width="15" height="15" viewBox="0 0 15 15"><path d="M3.8 10L7.5 6L11.2 10Z" fill="#a3a3a3"/></svg><svg class="ad" width="15" height="15" viewBox="0 0 15 15"><path d="M3.8 5.5L7.5 9.5L11.2 5.5Z" fill="#505050"/></svg></div>
<div id="R">
<div class="tg"><svg width="29" height="28" viewBox="0 0 29 28"><path d="M5 14.1L12.9 8V20.25Z M25 14.1L16.9 8V20.25Z" fill="#fff"/></svg></div>
<div class="gh" style="letter-spacing:0.572px;margin-right:-0.572px">tar1090 on github (3.14.1736)</div>
<div class="st" style="left:11px;top:50px"><b><span style="letter-spacing:0.973px;margin-right:-0.973px">Total Aircraft:</span></b> <span style="letter-spacing:0.047px;margin-right:-0.047px">1</span></div>
<div class="st" style="left:11px;top:84px"><b><span style="letter-spacing:0.965px;margin-right:-0.965px">With Position:</span></b> <span style="letter-spacing:0.047px;margin-right:-0.047px">1</span></div>
<div class="st" style="left:152.5px;top:42px"><b><span style="letter-spacing:0.913px;margin-right:-0.913px">Messages:</span></b><br><span style="letter-spacing:0.618px;margin-right:-0.618px">1466.1/sec</span></div>
<div class="st" style="left:152.5px;top:76px"><b><span style="letter-spacing:0.949px;margin-right:-0.949px">History:</span></b> <span style="letter-spacing:0.85px;margin-right:-0.85px">26216</span><br><span style="letter-spacing:0.593px;margin-right:-0.593px">positions</span></div>
<div class="st" style="left:11px;top:110px"><b><span style="letter-spacing:1.064px;margin-right:-1.064px">Stats available</span></b><br><b style="color:#0000ee;text-decoration:underline"><span style="letter-spacing:1.301px;margin-right:-1.301px">here</span></b></div>
<div class="tb"><div class="tab a" style="left:2px;width:70px"><span style="letter-spacing:0.14px;margin-right:-0.14px">Search</span></div><div class="tab" style="left:75px;width:65px"><span style="letter-spacing:0.139px;margin-right:-0.139px">Filters</span></div><div class="tab" style="left:142px;width:83px"><span style="letter-spacing:0.236px;margin-right:-0.236px">Columns</span></div></div>
<div class="lb" style="top:198px"><span style="letter-spacing:0.925px;margin-right:-0.925px">Search:</span></div>
<div class="in" style="top:213px"></div>
<div class="bt" style="left:127px;top:214px;width:60px"><span style="letter-spacing:0.427px;margin-right:-0.427px">Search</span></div>
<div class="bt" style="left:15px;top:235px;width:98px"><span style="letter-spacing:0.437px;margin-right:-0.437px">Clear Search</span></div>
<div class="lb" style="top:255px"><span style="letter-spacing:0.994px;margin-right:-0.994px">Jump to Airport or Latitude,</span><br><span style="letter-spacing:1.063px;margin-right:-1.063px">Longitude:</span></div>
<div class="in" style="top:285px"></div>
<div class="bt" style="left:127px;top:286px;width:48px"><span style="letter-spacing:0.512px;margin-right:-0.512px">Jump</span></div>
<div class="bt" style="left:180px;top:286px;width:49px"><span style="letter-spacing:0.52px;margin-right:-0.52px">Clear</span></div>
<div class="th" style="left:7px;width:20.3px"></div>
<div class="th" style="left:29.3px;width:72px"><span style="letter-spacing:0.219px;margin-right:-0.219px">Callsign</span></div>
<div class="th" style="left:103px;width:41.2px"><span style="letter-spacing:0.212px;margin-right:-0.212px">Route</span></div>
<div class="th" style="left:146px;width:36.3px"><span style="letter-spacing:0.14px;margin-right:-0.14px">Type</span></div>
<div class="th" style="left:184.1px;width:52.1px"><span style="letter-spacing:0.325px;margin-right:-0.325px">Squawk</span></div>
<div class="th" style="left:238px;width:48px"><span style="letter-spacing:0.551px;margin-right:-0.551px">Alt. (ft)</span></div>
<div class="th" style="left:288.1px;width:14px;text-align:left;padding-left:4px">S</div>
<div class="td" style="left:7px;width:20.3px"><svg style="position:absolute;left:1px;top:2.5px" width="19" height="12" viewBox="0 0 60 36" preserveAspectRatio="none"><rect width="60" height="36" fill="#1f3f8f"/><path d="M0 0L60 36M60 0L0 36" stroke="#fff" stroke-width="7"/><path d="M0 0L60 36M60 0L0 36" stroke="#d0202f" stroke-width="2.6"/><path d="M30 0V36M0 18H60" stroke="#fff" stroke-width="11"/><path d="M30 0V36M0 18H60" stroke="#d0202f" stroke-width="6.5"/></svg></div>
<div class="td" style="left:29.3px;width:72px;padding-left:1px;color:#d0d0d0"><span style="text-decoration:underline;letter-spacing:0.62px">no callsign</span></div>
<div class="td" style="left:103px;width:41.2px"></div>
<div class="td" style="left:146px;width:36.3px;padding-left:1px"><span style="letter-spacing:0.68px;margin-right:-0.68px">A400</span></div>
<div class="td" style="left:184.1px;width:52.1px;text-align:right;padding-right:1.5px"><span style="letter-spacing:0.676px;margin-right:-0.676px">3402</span></div>
<div class="td" style="left:238px;width:48px;text-align:right;padding-right:1.5px"><span style="letter-spacing:0.89px;margin-right:-0.89px">30975</span></div>
<div class="td" style="left:288.1px;width:14px"></div>
<div class="lg" style="left:7px;top:380.3px;width:49.8px;background:#2c5164"><span style="letter-spacing:0.018px;margin-right:-0.018px">ADS-B</span></div>
<div class="lg" style="left:61px;top:380.3px;width:93px;background:#2a6040"><span style="letter-spacing:0.254px;margin-right:-0.254px">UAT / ADS-R</span></div>
<div class="lg" style="left:158px;top:380.3px;width:44px;background:#5c5428"><span style="letter-spacing:0.014px;margin-right:-0.014px">MLAT</span></div>
<div class="lg" style="left:206px;top:380.3px;width:43px;background:#632a45"><span style="letter-spacing:-0.139px;margin-right:0.139px">TIS-B</span></div>
<div class="lg" style="left:7px;top:403.2px;width:58.7px;background:#2b2a66"><span style="letter-spacing:0.465px;margin-right:-0.465px">Mode-S</span></div>
<div class="lg" style="left:70px;top:403.2px;width:29px;background:#3e2340"><span style="letter-spacing:0.123px;margin-right:-0.123px">AIS</span></div>
<div class="hs"><i></i><svg style="position:absolute;left:0;top:0" width="300" height="15" viewBox="0 0 300 15"><path d="M4.2 7.3L8.3 3.8V10.8Z" fill="#a3a3a3"/><path d="M295.6 7.3L291.5 3.8V10.8Z" fill="#505050"/></svg></div>
</div>
</body></html>
